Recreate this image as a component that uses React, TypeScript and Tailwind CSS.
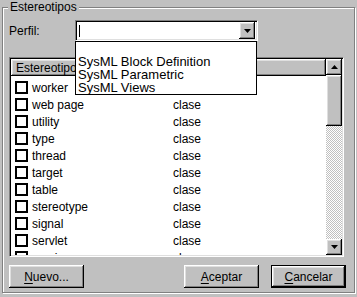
import React from 'react';

const rows = [
  'worker',
  'web page',
  'utility',
  'type',
  'thread',
  'target',
  'table',
  'stereotype',
  'signal',
  'servlet',
  'service',
];

const raised =
  'bg-[#c0c0c0] shadow-[inset_-1px_-1px_0_#000,inset_1px_1px_0_#fff,inset_-2px_-2px_0_#808080,inset_2px_2px_0_#dfdfdf]';

function Arrow({ up }: { up?: boolean }) {
  return (
    <svg width="7" height="4" viewBox="0 0 7 4" className={up ? 'rotate-180' : ''}>
      <path d="M0 0h7L3.5 4z" fill="#000" />
    </svg>
  );
}

function Button({ label, hot, isDefault }: { label: string; hot: string; isDefault?: boolean }) {
  const rest = label.slice(1);
  return (
    <div className={`w-[75px] h-[23px] ${isDefault ? 'border border-black' : ''}`}>
      <div className={`${raised} w-full h-full flex items-center justify-center text-[12px] text-black`}>
        <span>
          <span className="underline underline-offset-2">{hot}</span>
          {rest}
        </span>
      </div>
    </div>
  );
}

export default function App() {
  return (
    <div
      className="w-[357px] h-[297px] bg-[#c0c0c0] pt-[7px] pl-[2px] overflow-hidden text-black"
      style={{ fontFamily: '"Liberation Sans", Arial, sans-serif' }}
    >
      <div className="relative w-[353px] h-[286px] border border-[#808080] shadow-[inset_1px_1px_0_#fff,1px_1px_0_#fff] px-[6px]">
        <span className="absolute -top-[8px] left-[5px] px-[2px] bg-[#c0c0c0] text-[12px] leading-[14px]">
          Estereotipos
        </span>

        {/* Perfil row */}
        <div className="flex items-center mt-[12px] h-[21px]">
          <span className="w-[66px] text-[12px]">Perfil:</span>
          <div className="relative w-[183px] h-[21px]">
            <div className="w-full h-full bg-white border border-t-[#808080] border-l-[#808080] border-r-white border-b-white shadow-[inset_1px_1px_0_#000,inset_-1px_-1px_0_#dfdfdf] flex items-center pl-[3px] pr-[2px]">
              <div className="w-px h-[12px] bg-black" />
              <div className={`ml-auto w-[16px] h-[17px] ${raised} flex items-center justify-center`}>
                <Arrow />
              </div>
            </div>
            <div className="absolute left-0 top-full z-10 w-[182px] h-[54px] bg-white border border-black pt-[13px] pl-[2px] text-[13px] leading-[13px]">
              <div>SysML Block Definition</div>
              <div>SysML Parametric</div>
              <div>SysML Views</div>
            </div>
          </div>
        </div>

        {/* List view */}
        <div className="mt-[16px] w-[335px] h-[200px] border border-t-[#808080] border-l-[#808080] border-r-white border-b-white shadow-[inset_1px_1px_0_#000,inset_-1px_-1px_0_#dfdfdf] p-[1px]">
          <div className="flex h-full bg-white">
            <div className="flex-1 overflow-hidden">
              <div className="flex h-[17px] text-[12px]">
                <div className={`${raised} w-[162px] flex items-center pl-[5px]`}>Estereotipo</div>
                <div className={`${raised} flex-1`} />
              </div>
              <div className="pt-[3px]">
                {rows.map((r) => (
                  <div key={r} className="flex items-center h-[17px] text-[12px]">
                    <div className="ml-[4px] w-[13px] h-[13px] border-2 border-black bg-white shrink-0" />
                    <div className="ml-[4px] w-[141px] shrink-0">
                      <span>{r}</span>
                    </div>
                    <span>clase</span>
                  </div>
                ))}
              </div>
            </div>
            <div className="w-[16px] flex flex-col">
              <div className={`${raised} h-[16px] flex items-center justify-center`}>
                <Arrow up />
              </div>
              <div className={`${raised} h-[51px]`} />
              <div className="flex-1 bg-[repeating-conic-gradient(#fff_0%_25%,#c0c0c0_0%_50%)] bg-[length:2px_2px]" />
              <div className={`${raised} h-[16px] flex items-center justify-center`}>
                <Arrow />
              </div>
            </div>
          </div>
        </div>

        {/* Buttons */}
        <div className="flex mt-[8px] pr-[2px]">
          <Button label="Nuevo..." hot="N" />
          <div className="ml-auto flex gap-[12px]">
            <Button label="Aceptar" hot="A" />
            <Button label="Cancelar" hot="C" isDefault />
          </div>
        </div>
      </div>
    </div>
  );
}
